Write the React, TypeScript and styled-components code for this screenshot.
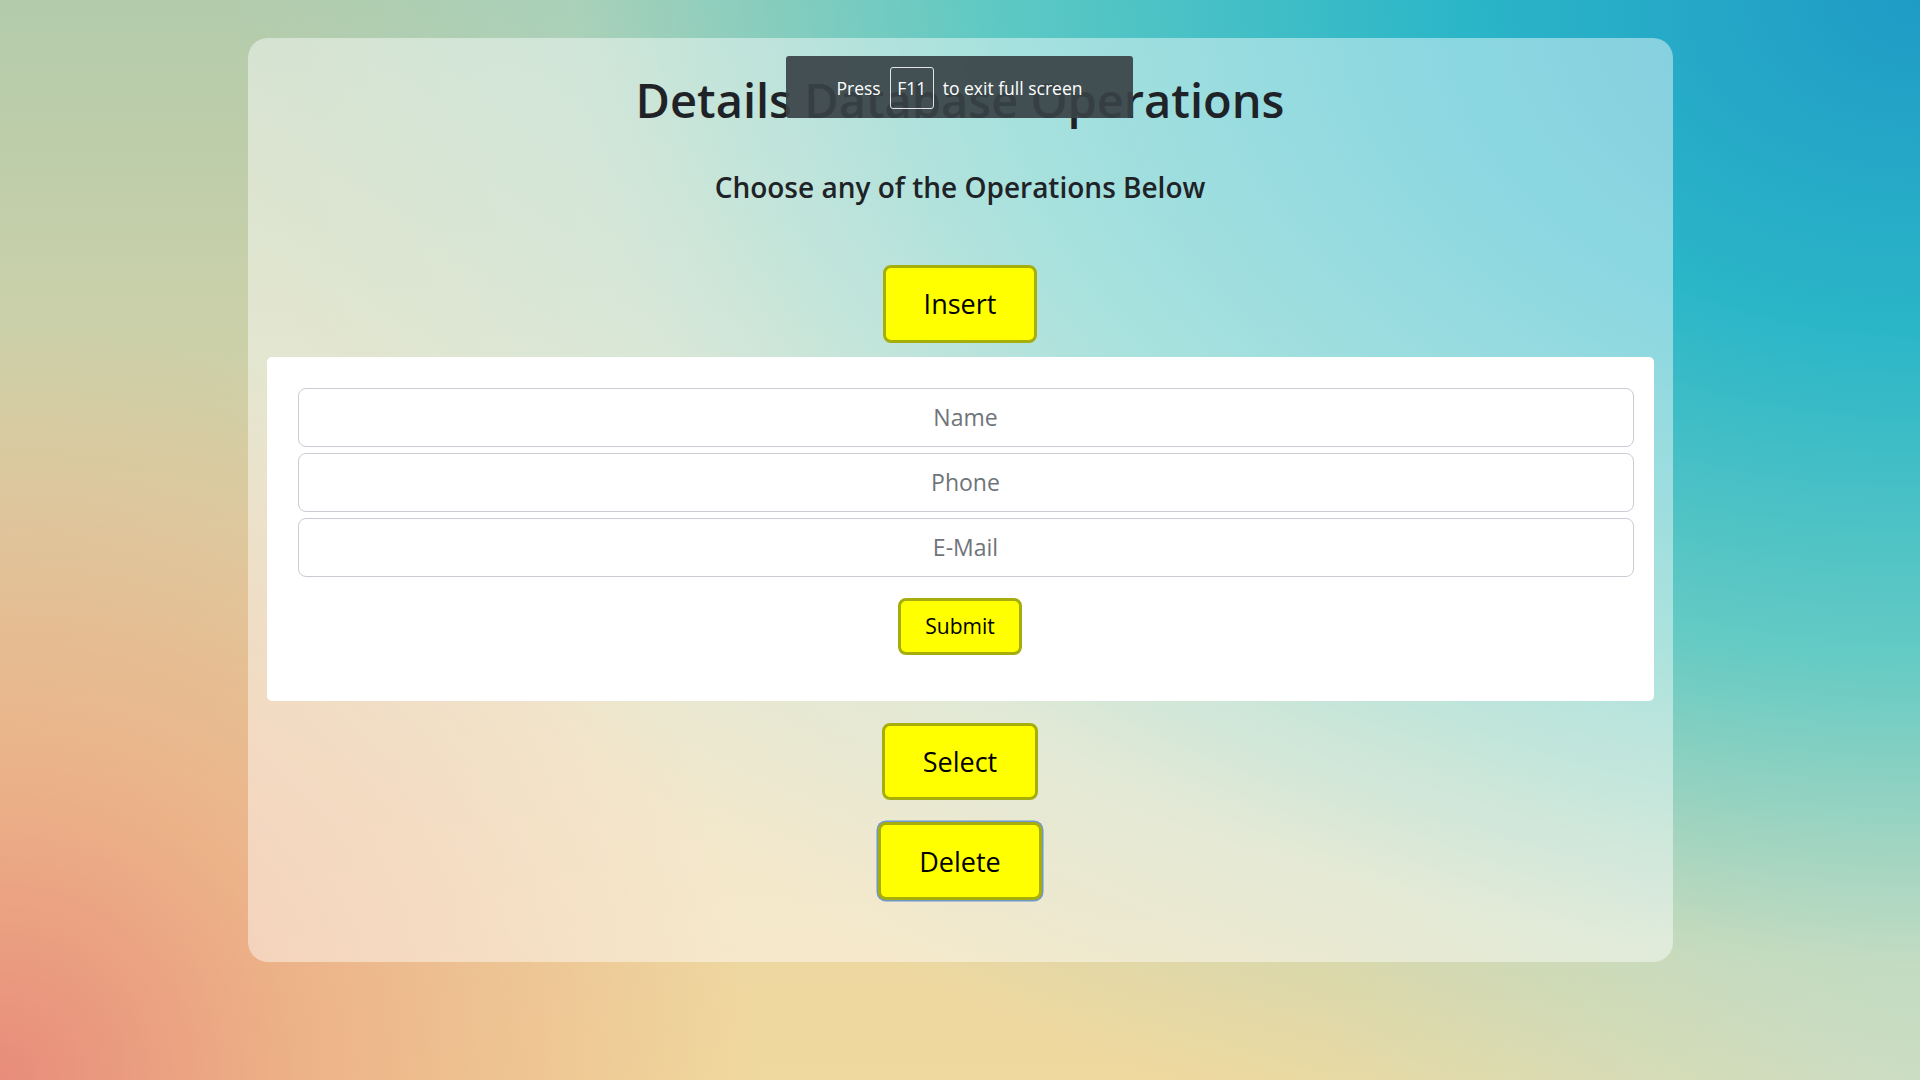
import React from "react";
import styled, { createGlobalStyle } from "styled-components";

const GlobalStyle = createGlobalStyle`
  html, body {
    margin: 0;
    padding: 0;
    height: 100%;
  }
  body {
    font-family: "Open Sans", "Noto Sans", sans-serif;
    color: #212529;
    background:
      radial-gradient(circle 760px at 0% 100%, rgba(232, 140, 122, 1) 0%, rgba(236, 166, 128, 0.75) 40%, rgba(240, 200, 150, 0) 100%),
      radial-gradient(ellipse 100% 128% at 100% 0%, #1f9bc6 0%, #2bb6c8 24%, rgba(72, 200, 202, 0.8) 48%, rgba(150, 218, 210, 0.35) 70%, rgba(170, 220, 210, 0) 88%),
      radial-gradient(circle 600px at 100% 100%, rgba(216, 222, 192, 1) 0%, rgba(220, 222, 192, 0) 100%),
      linear-gradient(180deg, #b3cbab 0%, #d6d3a8 45%, #ecd6a2 80%, #f0d99e 100%);
    min-height: 1080px;
  }
`;

const Page = styled.main`
  display: flex;
  justify-content: center;
  padding-top: 38px;
  min-height: 1080px;
  box-sizing: border-box;
`;

const Card = styled.section`
  width: 1425px;
  height: 924px;
  box-sizing: border-box;
  border-radius: 20px;
  background: rgba(255, 255, 255, 0.45);
  padding: 0 19px 62px;
  display: flex;
  flex-direction: column;
  align-items: center;
`;

const Title = styled.h1`
  margin: 34px 0 0;
  font-size: 47px;
  font-weight: 600;
  line-height: 1.2;
  color: #1f2327;
`;

const Subtitle = styled.h3`
  margin: 43px 0 0;
  font-size: 28px;
  font-weight: 600;
  line-height: 1.2;
  color: #1f2327;
`;

const YellowButton = styled.button<{ $small?: boolean; $focused?: boolean }>`
  box-sizing: border-box;
  height: ${(p) => (p.$small ? "57px" : "78px")};
  padding: 0 ${(p) => (p.$small ? "24px" : "38px")};
  font-family: "Open Sans", "Noto Sans", sans-serif;
  font-size: ${(p) => (p.$small ? "21px" : "27px")};
  font-weight: 400;
  color: #000;
  background: #ffff00;
  border: 3px solid #a6ae0c;
  border-radius: 8px;
  cursor: pointer;
  box-shadow: ${(p) => (p.$focused ? "0 0 0 1.5px #6f98c9" : "none")};
`;

const OpButton = styled(YellowButton)<{ $gap: number }>`
  margin-top: ${(p) => p.$gap}px;
`;

const FormPanel = styled.form`
  align-self: stretch;
  margin-top: 14px;
  background: #ffffff;
  border-radius: 5px;
  padding: 31px 20px 46px;
  display: flex;
  flex-direction: column;
  gap: 6px;
`;

const Field = styled.input`
  margin-left: 11px;
  height: 59px;
  box-sizing: border-box;
  border: 1px solid #c9ccd3;
  border-radius: 8px;
  background: #fff;
  text-align: center;
  font-family: "Open Sans", "Noto Sans", sans-serif;
  font-size: 23px;
  color: #212529;
  outline: none;
  &::placeholder {
    color: #6f7479;
  }
`;

const SubmitRow = styled.div`
  display: flex;
  justify-content: center;
  margin-top: 15px;
`;

const Toast = styled.div`
  position: absolute;
  top: 56px;
  left: 786px;
  width: 347px;
  height: 62px;
  box-sizing: border-box;
  background: rgba(56, 66, 70, 0.92);
  border-radius: 3px;
  display: flex;
  align-items: center;
  justify-content: center;
  gap: 9px;
  color: #ffffff;
  font-family: "Open Sans", "Noto Sans", sans-serif;
  font-size: 17.5px;
  padding-top: 2px;
`;

const Key = styled.span`
  display: inline-flex;
  align-items: center;
  justify-content: center;
  width: 44px;
  height: 42px;
  box-sizing: border-box;
  border: 1px solid rgba(255, 255, 255, 0.85);
  border-radius: 3px;
`;

export default function App() {
  return (
    <>
      <GlobalStyle />
      <Page>
        <Card>
          <Title>Details Database Operations</Title>
          <Subtitle>Choose any of the Operations Below</Subtitle>
          <OpButton $gap={60} type="button">Insert</OpButton>
          <FormPanel onSubmit={(e) => e.preventDefault()}>
            <Field type="text" placeholder="Name" />
            <Field type="text" placeholder="Phone" />
            <Field type="email" placeholder="E-Mail" />
            <SubmitRow>
              <YellowButton $small type="submit">Submit</YellowButton>
            </SubmitRow>
          </FormPanel>
          <OpButton $gap={22} type="button">Select</OpButton>
          <OpButton $gap={22} $focused type="button">Delete</OpButton>
        </Card>
      </Page>
      <Toast>
        <span>Press</span>
        <Key>F11</Key>
        <span>to exit full screen</span>
      </Toast>
    </>
  );
}
